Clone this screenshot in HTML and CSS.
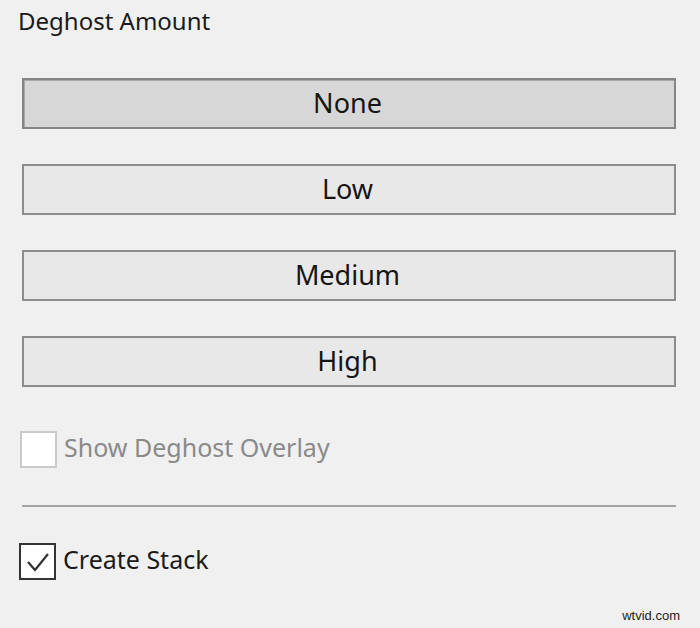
FILE: index.html
```html
<!DOCTYPE html>
<html>
<head>
<meta charset="utf-8">
<link rel="stylesheet" href="styles.css">
</head>
<body>
<div class="panel">
  <div class="title">Deghost Amount</div>
  <div class="buttons">
    <div class="btn selected">None</div>
    <div class="btn">Low</div>
    <div class="btn">Medium</div>
    <div class="btn">High</div>
  </div>
  <div class="check disabled">
    <span class="box"></span>
    <span class="label">Show Deghost Overlay</span>
  </div>
  <div class="sep"></div>
  <div class="check checked">
    <span class="box">
      <svg width="30" height="30" viewBox="0 0 30 30"><path d="M5 15 L12 23 L25 7" fill="none" stroke="#333" stroke-width="2.2"/></svg>
    </span>
    <span class="label">Create Stack</span>
  </div>
  <div class="wm">wtvid.com</div>
</div>
</body>
</html>
```
FILE: styles.css
```css
html, body {
  margin: 0;
  padding: 0;
  background: #f0f0f0;
}
.panel {
  width: 700px;
  height: 628px;
  position: relative;
  font-family: "Noto Sans", sans-serif;
  color: #1a1a1a;
}
.title {
  padding: 4px 0 0 18px;
  font-size: 24px;
  line-height: 34px;
}
.buttons {
  display: flex;
  flex-direction: column;
  gap: 35px;
  margin: 40px 0 0 22px;
  width: 654px;
}
.btn {
  box-sizing: border-box;
  height: 51px;
  border: 2px solid #8c8c8c;
  background: #e8e8e8;
  display: flex;
  align-items: center;
  justify-content: center;
  font-size: 27px;
  line-height: 1;
  padding-right: 3px;
  padding-bottom: 2px;
  color: #151515;
}
.btn.selected {
  background: #d7d7d7;
  border-color: #858585;
  box-shadow: inset 1px 1px 0 #a8a8a8;
}
.check {
  display: flex;
  align-items: center;
  gap: 7px;
  margin-left: 20px;
}
.check.disabled {
  margin-top: 44px;
}
.check .box {
  box-sizing: border-box;
  width: 37px;
  height: 37px;
  background: #fff;
  border: 2px solid #cacaca;
  display: flex;
  align-items: center;
  justify-content: center;
}
.check.checked .box {
  border-color: #333;
  margin-left: -1px;
}
.check .label {
  font-size: 25px;
  line-height: 30px;
  margin-top: -6px;
}
.check.disabled .label {
  color: #8a8a8a;
}
.sep {
  margin: 37px 0 0 22px;
  width: 654px;
  height: 2px;
  background: #a4a4a4;
}
.check.checked {
  margin-top: 36px;
}
.wm {
  position: absolute;
  right: 20px;
  bottom: 5px;
  font-family: "Liberation Sans", sans-serif;
  font-size: 13px;
  color: #222;
}
```
